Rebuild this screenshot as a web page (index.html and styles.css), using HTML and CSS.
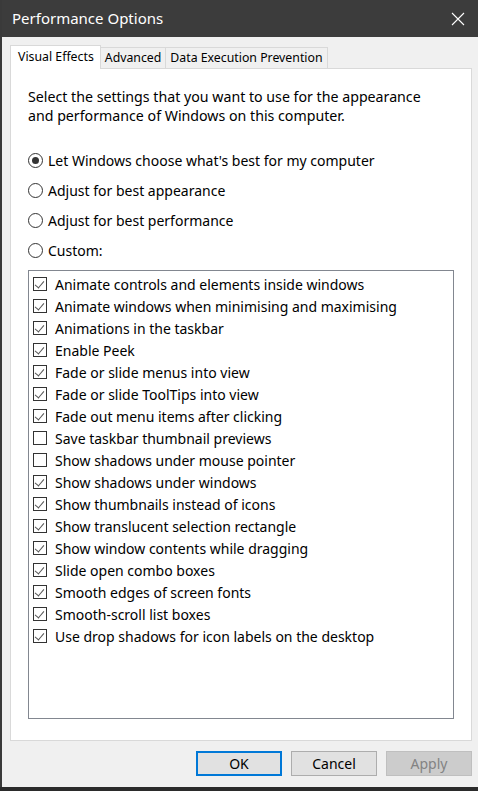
FILE: index.html
```html
<!DOCTYPE html>
<html>
<head>
<meta charset="utf-8">
<link rel="stylesheet" href="styles.css">
</head>
<body>
<div class="window">
  <div class="titlebar">
    <span class="title">Performance Options</span>
    <svg class="close" width="14" height="14" viewBox="0 0 14 14"><path d="M1 1 L13 13 M13 1 L1 13" stroke="#fff" stroke-width="1.1" fill="none"/></svg>
  </div>
  <div class="body">
    <div class="tabs">
      <div class="tab active">Visual Effects</div>
      <div class="tab">Advanced</div>
      <div class="tab">Data Execution Prevention</div>
    </div>
    <div class="panel">
      <p class="intro">Select the settings that you want to use for the appearance and performance of Windows on this computer.</p>
      <div class="radios">
        <div class="radio-row"><span class="radio checked"></span><span>Let Windows choose what's best for my computer</span></div>
        <div class="radio-row"><span class="radio"></span><span>Adjust for best appearance</span></div>
        <div class="radio-row"><span class="radio"></span><span>Adjust for best performance</span></div>
        <div class="radio-row"><span class="radio"></span><span>Custom:</span></div>
      </div>
      <div class="listbox">
        <div class="item"><span class="cb on"></span>Animate controls and elements inside windows</div>
        <div class="item"><span class="cb on"></span>Animate windows when minimising and maximising</div>
        <div class="item"><span class="cb on"></span>Animations in the taskbar</div>
        <div class="item"><span class="cb on"></span>Enable Peek</div>
        <div class="item"><span class="cb on"></span>Fade or slide menus into view</div>
        <div class="item"><span class="cb on"></span>Fade or slide ToolTips into view</div>
        <div class="item"><span class="cb on"></span>Fade out menu items after clicking</div>
        <div class="item"><span class="cb"></span>Save taskbar thumbnail previews</div>
        <div class="item"><span class="cb"></span>Show shadows under mouse pointer</div>
        <div class="item"><span class="cb on"></span>Show shadows under windows</div>
        <div class="item"><span class="cb on"></span>Show thumbnails instead of icons</div>
        <div class="item"><span class="cb on"></span>Show translucent selection rectangle</div>
        <div class="item"><span class="cb on"></span>Show window contents while dragging</div>
        <div class="item"><span class="cb on"></span>Slide open combo boxes</div>
        <div class="item"><span class="cb on"></span>Smooth edges of screen fonts</div>
        <div class="item"><span class="cb on"></span>Smooth-scroll list boxes</div>
        <div class="item"><span class="cb on"></span>Use drop shadows for icon labels on the desktop</div>
      </div>
    </div>
    <div class="buttons">
      <div class="btn default">OK</div>
      <div class="btn">Cancel</div>
      <div class="btn disabled">Apply</div>
    </div>
  </div>
  <div class="bottom"></div>
</div>
</body>
</html>
```

FILE: styles.css
```css
* { box-sizing: border-box; }
html, body { margin: 0; padding: 0; }
body {
  width: 478px;
  height: 791px;
  overflow: hidden;
  background: #2b2b2b;
  font-family: "Noto Sans", "Open Sans", sans-serif;
  font-size: 14px;
  color: #000;
}
.window {
  width: 478px;
  height: 791px;
  display: flex;
  flex-direction: column;
  background: #f0f0f0;
  border-left: 2px solid #3a3a3a;
}
.titlebar {
  height: 37px;
  flex: none;
  background: #3c3c3c;
  display: flex;
  align-items: center;
  justify-content: space-between;
  padding: 0 13px 0 10px;
}
.title {
  color: #fff;
  font-size: 15px;
  line-height: 37px;
}
.close { display: block; }
.body {
  flex: 1;
  display: flex;
  flex-direction: column;
  padding: 8px 6px 0 8px;
}
.tabs {
  display: flex;
  align-items: flex-end;
  height: 23px;
  position: relative;
  z-index: 1;
}
.tab {
  height: 21px;
  border: 1px solid #d9d9d9;
  border-bottom: none;
  background: #f0f0f0;
  padding: 0 4px;
  font-size: 12.3px;
  line-height: 20px;
  margin-left: -1px;
}
.tab.active {
  height: 24px;
  margin-bottom: -1px;
  background: #fff;
  margin-left: 0;
  padding: 0 6px 0 7px;
  line-height: 22px;
}
.panel {
  height: 673px;
  background: #fff;
  border: 1px solid #d9d9d9;
  padding: 18px 15px 0 17px;
  display: flex;
  flex-direction: column;
}
.intro {
  margin: 0;
  line-height: 19px;
  width: 404px;
  font-size: 14.2px;
}
.radios {
  margin-top: 20px;
  display: flex;
  flex-direction: column;
}
.radio-row {
  height: 30px;
  display: flex;
  align-items: center;
  gap: 5px;
}
.radio {
  width: 15px;
  height: 15px;
  border: 1px solid #333;
  border-radius: 50%;
  background: #fff;
  position: relative;
  flex: none;
}
.radio.checked::after {
  content: "";
  position: absolute;
  left: 3px;
  top: 3px;
  width: 7px;
  height: 7px;
  border-radius: 50%;
  background: #333;
}
.listbox {
  margin-top: 5px;
  height: 449px;
  width: 426px;
  border: 1px solid #828790;
  padding: 2px 0 0 4px;
}
.item {
  height: 22px;
  display: flex;
  align-items: center;
  gap: 8px;
  white-space: nowrap;
}
.cb {
  width: 14px;
  height: 14px;
  border: 1px solid #333;
  background: #fff;
  position: relative;
  flex: none;
}
.cb.on::after {
  content: "";
  position: absolute;
  left: 3px;
  top: 1px;
  width: 4px;
  height: 8px;
  border-right: 1.3px solid #555;
  border-bottom: 1.3px solid #555;
  transform: rotate(40deg);
}
.buttons {
  display: flex;
  justify-content: flex-end;
  gap: 9px;
  margin-top: 10px;
}
.btn {
  width: 86px;
  height: 25px;
  border: 1px solid #adadad;
  background: #e1e1e1;
  text-align: center;
  line-height: 23px;
  font-size: 14px;
}
.btn.default {
  border: 2px solid #0078d7;
  line-height: 21px;
}
.btn.disabled {
  background: #cccccc;
  border-color: #bfbfbf;
  color: #838383;
}
.bottom {
  height: 4px;
  flex: none;
  background: #2b2b2b;
  margin-left: -2px;
}
```
